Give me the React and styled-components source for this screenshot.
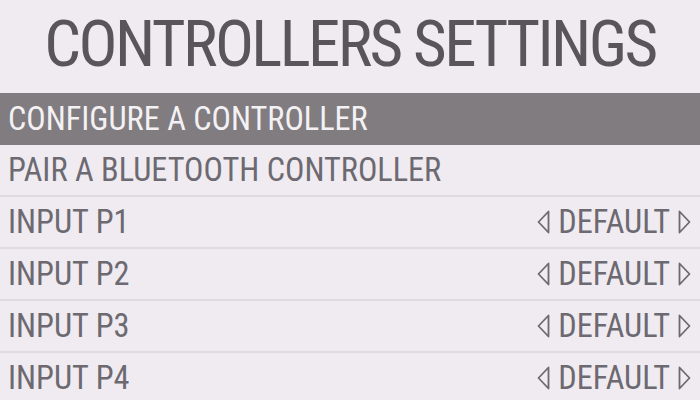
import styled, { createGlobalStyle } from "styled-components";

const GlobalStyle = createGlobalStyle`
  html, body {
    margin: 0;
    padding: 0;
    background: #efebf0;
  }
  body {
    font-family: "Roboto Condensed", "Open Sans", sans-serif;
  }
`;

const Screen = styled.div`
  width: 700px;
  height: 400px;
  overflow: hidden;
  background: #efebf0;
`;

const Title = styled.h1`
  margin: 0;
  height: 93px;
  display: flex;
  align-items: center;
  justify-content: center;
  font-size: 65px;
  font-weight: normal;
  letter-spacing: -2.6px;
  white-space: nowrap;
  color: #59555b;
  padding-bottom: 5px;
  box-sizing: border-box;
`;

const List = styled.div`
  display: flex;
  flex-direction: column;
`;

const Row = styled.div`
  height: 52px;
  display: flex;
  align-items: center;
  justify-content: space-between;
  padding: 0 9px 0 8px;
  box-sizing: border-box;
  border-bottom: ${(p) => (p.$selected ? "none" : "2px solid #dedadf")};
  background: ${(p) => (p.$selected ? "#807c80" : "transparent")};
  color: ${(p) => (p.$selected ? "#f4f1f4" : "#6c6970")};
  font-size: 32.3px;
  white-space: nowrap;
`;

const Label = styled.span`
  line-height: 1;
`;

const Choice = styled.div`
  display: flex;
  align-items: center;
  gap: 8px;
`;

const Arrow = ({ dir }) => (
  <svg width="13" height="24" viewBox="0 0 13 24">
    <polygon
      points={dir === "left" ? "11.5,1.5 1.5,12 11.5,22.5" : "1.5,1.5 11.5,12 1.5,22.5"}
      fill="none"
      stroke="#6c6970"
      strokeWidth="1.8"
      strokeLinejoin="round"
    />
  </svg>
);

const items = [
  { label: "CONFIGURE A CONTROLLER", selected: true },
  { label: "PAIR A BLUETOOTH CONTROLLER" },
  { label: "INPUT P1", value: "DEFAULT" },
  { label: "INPUT P2", value: "DEFAULT" },
  { label: "INPUT P3", value: "DEFAULT" },
  { label: "INPUT P4", value: "DEFAULT" },
];

const App = () => {
  return (
    <Screen>
      <GlobalStyle />
      <Title>CONTROLLERS SETTINGS</Title>
      <List>
        {items.map((it) => (
          <Row key={it.label} $selected={it.selected}>
            <Label>{it.label}</Label>
            {it.value && (
              <Choice>
                <Arrow dir="left" />
                <Label>{it.value}</Label>
                <Arrow dir="right" />
              </Choice>
            )}
          </Row>
        ))}
      </List>
    </Screen>
  );
};

export default App;
